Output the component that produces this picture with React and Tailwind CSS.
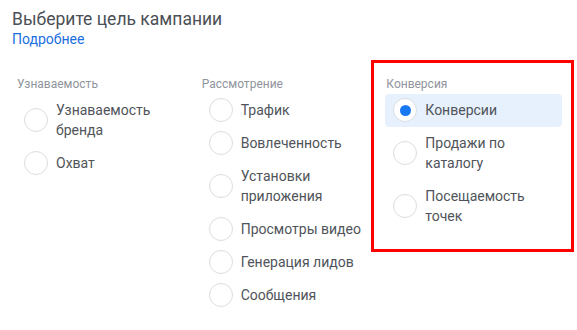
const groups = [
  {
    title: "Узнаваемость",
    items: ["Узнаваемость бренда", "Охват"],
  },
  {
    title: "Рассмотрение",
    items: [
      "Трафик",
      "Вовлеченность",
      "Установки приложения",
      "Просмотры видео",
      "Генерация лидов",
      "Сообщения",
    ],
  },
  {
    title: "Конверсия",
    items: ["Конверсии", "Продажи по каталогу", "Посещаемость точек"],
    highlight: true,
  },
];

function Radio({ checked }) {
  return (
    <span className="-my-[2px] flex h-6 w-6 shrink-0 items-center justify-center rounded-full border border-[#dadde1] bg-white">
      {checked && <span className="h-[11px] w-[11px] rounded-full bg-[#1877f2]" />}
    </span>
  );
}

function Option({ label, checked }) {
  return (
    <div
      className={
        "flex items-center gap-2 rounded px-2 py-[6.5px] " +
        (checked ? "bg-[#e7f0fd]" : "")
      }
    >
      <Radio checked={checked} />
      <span className="max-w-[122px] text-[14px] leading-5 text-[#50545a]">{label}</span>
    </div>
  );
}

export default function App() {
  return (
    <div className="h-[330px] w-[577px] bg-white pt-[9px] font-['Roboto',sans-serif]">
      <div className="px-3">
        <h1 className="text-[17.5px] leading-5 text-[#4b4f56]">Выберите цель кампании</h1>
        <a href="#" className="block text-[14px] leading-5 text-[#1a6fe0]">
          Подробнее
        </a>
      </div>

      <div className="ml-3 mt-[27px] grid w-[554px] grid-cols-3">
        {groups.map((g) => (
          <div key={g.title} className="relative px-1">
            {g.highlight && (
              <div className="pointer-events-none absolute -left-[10px] -right-[8px] -top-[16px] h-[192px] border-[3px] border-[#ff0000]" />
            )}
            <div className="mb-[1.5px] pl-[1px] text-[12px] leading-4 text-[#90949c]">{g.title}</div>
            {g.items.map((it, i) => (
              <Option key={it} label={it} checked={g.highlight && i === 0} />
            ))}
          </div>
        ))}
      </div>
    </div>
  );
}
